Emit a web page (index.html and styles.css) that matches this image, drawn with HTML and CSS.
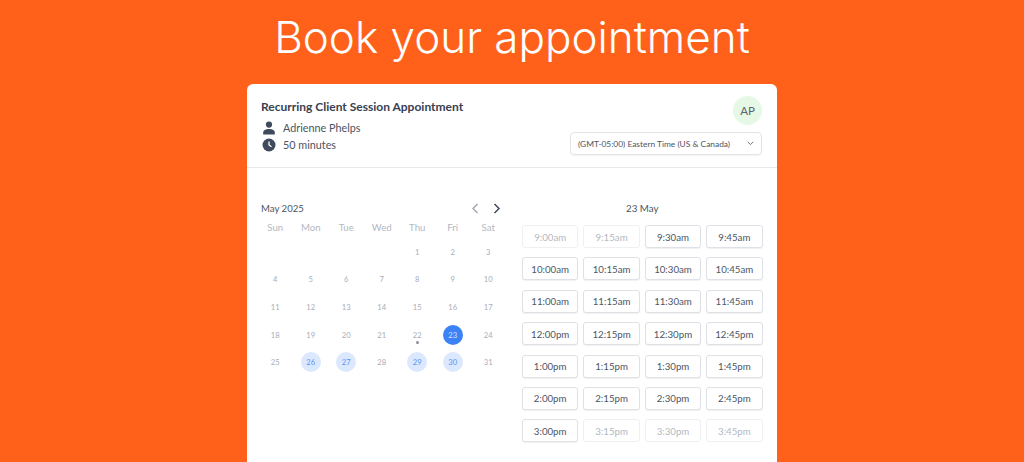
FILE: index.html
```html
<!DOCTYPE html>
<html>
<head>
    <meta charset="UTF-8">
    <title>Book your appointment</title>
    <link rel="stylesheet" href="styles.css">
</head>

<body>
    <h1 class="headline">Book your appointment</h1>

    <div class="card">
        <div class="card-head">
            <div class="details">
                <h2>Recurring Client Session Appointment</h2>
                <div class="meta">
                    <svg width="14" height="14" viewBox="0 0 14 14"><circle cx="7" cy="3.6" r="3.1" fill="#3f4a5c"/><path d="M1.2 13.4v-1.7c0-2.3 2.4-3.6 5.8-3.6s5.8 1.3 5.8 3.6v1.7z" fill="#3f4a5c"/></svg>
                    <span>Adrienne Phelps</span>
                </div>
                <div class="meta">
                    <svg width="14" height="14" viewBox="0 0 14 14"><circle cx="7" cy="7" r="6.5" fill="#3f4a5c"/><path d="M7 3.4V7l2.5 1.7" fill="none" stroke="#fff" stroke-width="1.3"/></svg>
                    <span>50 minutes</span>
                </div>
            </div>
            <div class="side">
                <div class="avatar">AP</div>
                <div class="tz">
                    <span>(GMT-05:00) Eastern Time (US &amp; Canada)</span>
                    <svg width="7" height="5" viewBox="0 0 7 5"><path d="M.7.8l2.8 2.8L6.3.8" fill="none" stroke="#6b7280" stroke-width="1"/></svg>
                </div>
            </div>
        </div>

        <div class="card-body">
            <div class="calendar">
                <div class="cal-top">
                    <span class="month">May 2025</span>
                    <div class="arrows">
                        <svg width="8" height="11" viewBox="0 0 8 11"><path d="M6.5 1L2 5.5 6.5 10" fill="none" stroke="#9ca3af" stroke-width="1.3"/></svg>
                        <svg width="8" height="11" viewBox="0 0 8 11"><path d="M1.5 1L6 5.5 1.5 10" fill="none" stroke="#3f4a5c" stroke-width="1.5"/></svg>
                    </div>
                </div>
                <div class="weekdays">
                    <span>Sun</span><span>Mon</span><span>Tue</span><span>Wed</span><span>Thu</span><span>Fri</span><span>Sat</span>
                </div>
                <div class="days">
                    <span></span><span></span><span></span><span></span><span>1</span><span>2</span><span>3</span>
                    <span>4</span><span>5</span><span>6</span><span>7</span><span>8</span><span>9</span><span>10</span>
                    <span>11</span><span>12</span><span>13</span><span>14</span><span>15</span><span>16</span><span>17</span>
                    <span>18</span><span>19</span><span>20</span><span>21</span><span class="today">22</span><span class="selected">23</span><span>24</span>
                    <span>25</span><span class="open">26</span><span class="open">27</span><span>28</span><span class="open">29</span><span class="open">30</span><span>31</span>
                </div>
            </div>

            <div class="times">
                <div class="times-title">23 May</div>
                <div class="slots">
                    <button class="off">9:00am</button><button class="off">9:15am</button><button>9:30am</button><button>9:45am</button>
                    <button>10:00am</button><button>10:15am</button><button>10:30am</button><button>10:45am</button>
                    <button>11:00am</button><button>11:15am</button><button>11:30am</button><button>11:45am</button>
                    <button>12:00pm</button><button>12:15pm</button><button>12:30pm</button><button>12:45pm</button>
                    <button>1:00pm</button><button>1:15pm</button><button>1:30pm</button><button>1:45pm</button>
                    <button>2:00pm</button><button>2:15pm</button><button>2:30pm</button><button>2:45pm</button>
                    <button>3:00pm</button><button class="off">3:15pm</button><button class="off">3:30pm</button><button class="off">3:45pm</button>
                </div>
            </div>
        </div>
    </div>
</body>
</html>
```

FILE: styles.css
```css
html, body {
    height: 100%;
}

body {
    margin: 0;
    overflow: hidden;
    background-color: #ff611a;
    font-family: "Lato", "Liberation Sans", sans-serif;
    color: #3f4a5c;
}

.headline {
    margin: 0;
    padding-top: 7px;
    height: 77px;
    box-sizing: border-box;
    text-align: center;
    font-family: "Inter", "Lato", sans-serif;
    font-size: 44px;
    line-height: 60px;
    font-weight: 300;
    color: #fff;
}

.card {
    width: 530px;
    height: 400px;
    margin: 7px auto 0;
    background: #fff;
    border-radius: 6px;
}

.card-head {
    height: 84px;
    box-sizing: border-box;
    padding: 12px 15px 0 14px;
    border-bottom: 1px solid #e8eaee;
    display: flex;
    justify-content: space-between;
}

.details h2 {
    margin: 2px 0 4px;
    font-size: 12px;
    line-height: 17px;
    font-weight: 700;
    color: #374151;
}

.meta {
    display: flex;
    align-items: center;
    gap: 7px;
    height: 17px;
    font-size: 10.8px;
    color: #4b5563;
}

.meta svg {
    margin-left: 1px;
}

.side {
    display: flex;
    flex-direction: column;
    align-items: flex-end;
    gap: 7px;
}

.avatar {
    width: 29px;
    height: 29px;
    border-radius: 50%;
    background: #e6f8e6;
    display: flex;
    align-items: center;
    justify-content: center;
    font-size: 11.5px;
    color: #5b6472;
}

.tz {
    width: 192px;
    height: 23px;
    box-sizing: border-box;
    padding: 0 7px 0 7px;
    display: flex;
    align-items: center;
    justify-content: space-between;
    border: 1px solid #e2e4e9;
    border-radius: 4px;
    box-shadow: 0 1px 1px rgba(0, 0, 0, 0.05);
    font-size: 8.4px;
    white-space: nowrap;
    color: #4b5563;
}

.card-body {
    display: flex;
    padding: 33px 15px 0 14px;
}

.calendar {
    width: 242px;
    margin-right: 19px;
}

.cal-top {
    display: flex;
    justify-content: space-between;
    align-items: center;
    height: 14px;
}

.month {
    font-size: 9.6px;
    color: #4b5563;
}

.arrows {
    display: flex;
    gap: 14px;
    padding-right: 2px;
}

.weekdays,
.days {
    display: grid;
    grid-template-columns: repeat(7, 35.5px);
    margin-left: -3.5px;
    text-align: center;
}

.weekdays {
    margin-top: 4px;
    height: 17px;
    line-height: 17px;
    font-size: 9.6px;
    color: #b3b8c2;
}

.days {
    grid-auto-rows: 27.6px;
    margin-top: 2px;
    font-size: 7.6px;
    color: #a8adb8;
}

.days span {
    display: flex;
    align-items: center;
    justify-content: center;
    position: relative;
}

.days .today::after {
    content: '';
    position: absolute;
    left: 50%;
    top: 20px;
    width: 3px;
    height: 3px;
    margin-left: -1.5px;
    border-radius: 50%;
    background: #8b909c;
}

.days .selected::before,
.days .open::before {
    content: '';
    position: absolute;
    left: 50%;
    top: 50%;
    width: 20px;
    height: 20px;
    margin: -10px 0 0 -10px;
    border-radius: 50%;
    background: #dbe8fd;
    z-index: -1;
}

.days .selected::before {
    background: #3b82f6;
}

.days .open {
    color: #5b93f5;
    isolation: isolate;
}

.days .selected {
    color: #d6e4fd;
    isolation: isolate;
}

.times {
    flex: 1;
}

.times-title {
    height: 14px;
    line-height: 14px;
    text-align: center;
    font-size: 9.8px;
    color: #4b5563;
}

.slots {
    display: grid;
    grid-template-columns: repeat(4, 56.4px);
    grid-auto-rows: 23px;
    column-gap: 5px;
    row-gap: 9.4px;
    margin-top: 10px;
}

.slots button {
    padding: 0;
    background: #fff;
    border: 1px solid #dfe1e6;
    border-radius: 3px;
    box-shadow: 0 1px 1px rgba(0, 0, 0, 0.06);
    font-family: inherit;
    font-size: 9.7px;
    color: #4b5563;
}

.slots .off {
    border-color: #eef0f2;
    box-shadow: none;
    color: #b3b8c2;
}
```
